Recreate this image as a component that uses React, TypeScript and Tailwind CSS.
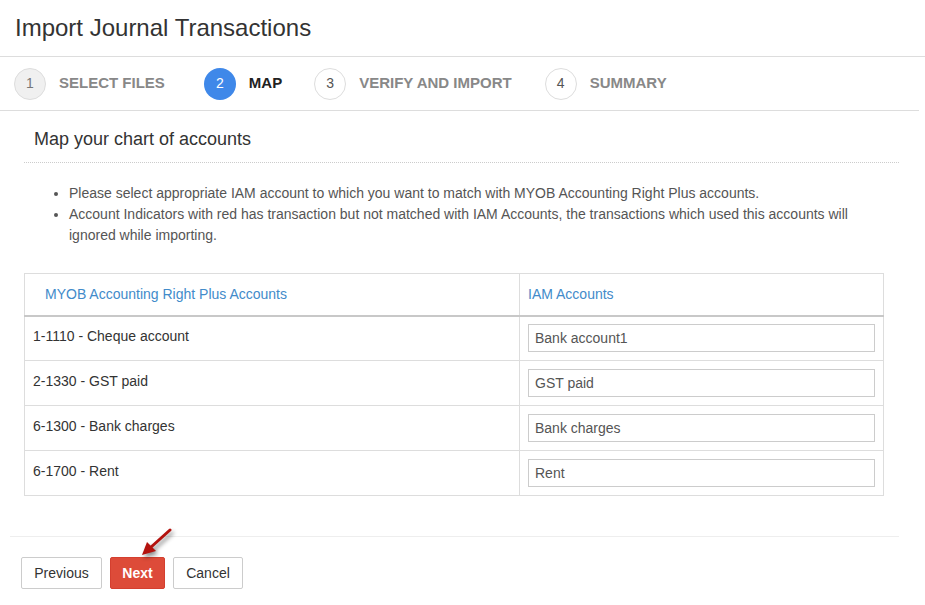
const steps = [
  { n: 1, label: "SELECT FILES", state: "done", gap: "mr-[39px]" },
  { n: 2, label: "MAP", state: "active", gap: "mr-[32px]" },
  { n: 3, label: "VERIFY AND IMPORT", state: "todo", gap: "mr-[33px]" },
  { n: 4, label: "SUMMARY", state: "todo", gap: "" },
];

const rows = [
  { account: "1-1110 - Cheque account", iam: "Bank account1" },
  { account: "2-1330 - GST paid", iam: "GST paid" },
  { account: "6-1300 - Bank charges", iam: "Bank charges" },
  { account: "6-1700 - Rent", iam: "Rent" },
];

export default function App() {
  return (
    <div className="min-h-[605px] w-[925px] bg-white font-['Liberation_Sans',Arial,sans-serif] text-[#333]">
      {/* Page title */}
      <div className="h-[57px] border-b border-[#ddd] pl-[15px] pt-[13px]">
        <h1 className="text-[24px] leading-[30px] text-[#333]">Import Journal Transactions</h1>
      </div>

      {/* Wizard steps */}
      <div className="mr-[6px] flex h-[54px] items-center border-b border-[#ddd] pl-[14px]">
        {steps.map((s) => (
          <div key={s.n} className={`flex items-center ${s.gap}`}>
            <span
              className={`flex h-[32px] w-[32px] items-center justify-center rounded-full text-[14px] ${
                s.state === "active"
                  ? "bg-[#3f88e9] text-white"
                  : s.state === "done"
                  ? "border border-[#ddd] bg-[#f0f0f0] text-[#777]"
                  : "border border-[#ddd] bg-white text-[#555]"
              }`}
            >
              {s.n}
            </span>
            <span
              className={`ml-[13px] text-[15px] font-bold ${
                s.state === "active" ? "text-[#222]" : "text-[#888]"
              }`}
            >
              {s.label}
            </span>
          </div>
        ))}
      </div>

      {/* Section */}
      <div className="ml-[24px] mr-[26px]">
        <div className="border-b border-dotted border-[#ccc] pb-[12px] pl-[10px] pt-[17px]">
          <h2 className="text-[18px] leading-[22px] text-[#333]">Map your chart of accounts</h2>
        </div>

        <ul className="mt-[20px] list-disc pl-[45px] pr-[30px] text-[14px] leading-[21px] text-[#555]">
          <li>Please select appropriate IAM account to which you want to match with MYOB Accounting Right Plus accounts.</li>
          <li>
            Account Indicators with red has transaction but not matched with IAM Accounts, the transactions which used
            this accounts will ignored while importing.
          </li>
        </ul>

        <table className="mt-[27px] w-[860px] border-collapse border border-[#ddd] text-[14px]">
          <thead>
            <tr className="h-[42px] border-b-2 border-[#c8c8c8]">
              <th className="w-[495px] border-r border-[#ddd] pl-[20px] text-left font-normal text-[#428bca]">
                MYOB Accounting Right Plus Accounts
              </th>
              <th className="pl-[8px] text-left font-normal text-[#428bca]">IAM Accounts</th>
            </tr>
          </thead>
          <tbody>
            {rows.map((r) => (
              <tr key={r.account} className="h-[45px] border-b border-[#ddd]">
                <td className="border-r border-[#ddd] pb-[4px] pl-[8px] align-middle text-[#333]">{r.account}</td>
                <td className="px-[8px] align-middle">
                  <input
                    readOnly
                    value={r.iam}
                    className="h-[28px] w-[347px] border border-[#ccc] px-[6px] text-[14px] text-[#555] outline-none"
                  />
                </td>
              </tr>
            ))}
          </tbody>
        </table>
      </div>

      {/* Footer buttons */}
      <div className="relative mx-[10px] mr-[26px] mt-[40px] border-t border-[#eee] pl-[11px] pt-[20px]">
        <div className="flex gap-[8px]">
          <button className="h-[32px] w-[81px] rounded-[2px] border border-[#ccc] bg-white text-[14px] text-[#333]">
            Previous
          </button>
          <button className="h-[32px] w-[55px] rounded-[2px] border border-[#d43f2f] bg-[#dd4b39] text-[14px] font-bold text-white">
            Next
          </button>
          <button className="h-[32px] w-[70px] rounded-[2px] border border-[#ccc] bg-white text-[14px] text-[#333]">
            Cancel
          </button>
        </div>
        {/* red pointer arrow */}
        <svg
          className="absolute left-[128px] top-[-10px]"
          width="40"
          height="36"
          viewBox="0 0 40 36"
          style={{ filter: "drop-shadow(2px 3px 2px rgba(0,0,0,0.45))" }}
        >
          <line x1="32" y1="3" x2="12" y2="21" stroke="#b3120e" strokeWidth="3" strokeLinecap="round" />
          <polygon points="4,28 9,15 18,24" fill="#b3120e" />
        </svg>
      </div>
    </div>
  );
}
